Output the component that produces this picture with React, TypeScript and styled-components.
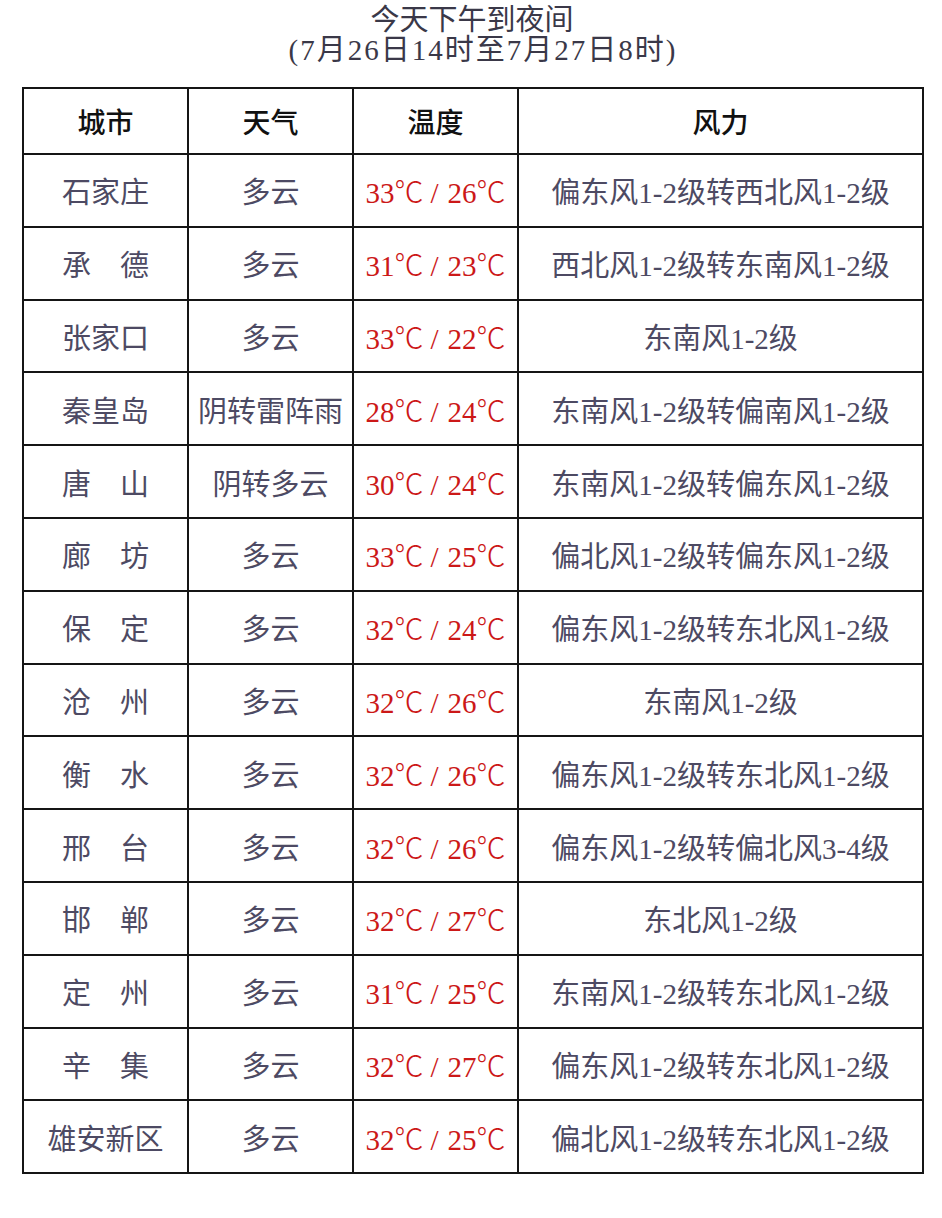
import * as React from "react";
import styled, { createGlobalStyle } from "styled-components";

const GlobalStyle = createGlobalStyle`
  html, body {
    margin: 0;
    background: #ffffff;
  }
`;

const Page = styled.div`
  width: 942px;
  padding: 5px 0 40px 22px;
  box-sizing: border-box;
  font-family: "Liberation Serif", "Noto Sans CJK SC", serif;
`;

const Title = styled.h1`
  margin: 0 0 22px;
  width: 900px;
  text-align: center;
  font-weight: 400;
  font-size: 29px;
  line-height: 30px;
  color: #3a3848;
`;

const SubTitle = styled.span`
  display: inline-block;
  letter-spacing: 2px;
  padding-left: 22px;
`;

const Table = styled.table`
  width: 900px;
  border-collapse: collapse;
  table-layout: fixed;
`;

const Col = styled.col<{ $w: number }>`
  width: ${(p) => p.$w}px;
`;

const HeadCell = styled.th`
  height: 64px;
  border: 2px solid #151515;
  font-size: 28px;
  font-weight: 500;
  color: #111111;
  text-align: center;
  padding: 0;
`;

const Cell = styled.td<{ $hot?: boolean }>`
  height: 70.8px;
  border: 2px solid #151515;
  font-size: 29px;
  color: ${(p) => (p.$hot ? "#cc1818" : "#4d4a63")};
  text-align: center;
  white-space: nowrap;
  padding: 0;
`;

const Deg = styled.span`
  font-family: "Noto Sans CJK SC", sans-serif;
  font-weight: 300;
`;

const Slash = styled.span`
  display: inline-block;
  margin: 0 9px 0 7px;
`;

const rows: [string, string, [number, number], string][] = [
  ["石家庄", "多云", [33, 26], "偏东风1-2级转西北风1-2级"],
  ["承　德", "多云", [31, 23], "西北风1-2级转东南风1-2级"],
  ["张家口", "多云", [33, 22], "东南风1-2级"],
  ["秦皇岛", "阴转雷阵雨", [28, 24], "东南风1-2级转偏南风1-2级"],
  ["唐　山", "阴转多云", [30, 24], "东南风1-2级转偏东风1-2级"],
  ["廊　坊", "多云", [33, 25], "偏北风1-2级转偏东风1-2级"],
  ["保　定", "多云", [32, 24], "偏东风1-2级转东北风1-2级"],
  ["沧　州", "多云", [32, 26], "东南风1-2级"],
  ["衡　水", "多云", [32, 26], "偏东风1-2级转东北风1-2级"],
  ["邢　台", "多云", [32, 26], "偏东风1-2级转偏北风3-4级"],
  ["邯　郸", "多云", [32, 27], "东北风1-2级"],
  ["定　州", "多云", [31, 25], "东南风1-2级转东北风1-2级"],
  ["辛　集", "多云", [32, 27], "偏东风1-2级转东北风1-2级"],
  ["雄安新区", "多云", [32, 25], "偏北风1-2级转东北风1-2级"],
];

export default function App() {
  return (
    <Page>
      <GlobalStyle />
      <Title>
        今天下午到夜间
        <br />
        <SubTitle>(7月26日14时至7月27日8时)</SubTitle>
      </Title>
      <Table>
        <colgroup>
          <Col $w={165} />
          <Col $w={165} />
          <Col $w={165} />
          <Col $w={405} />
        </colgroup>
        <thead>
          <tr>
            <HeadCell>城市</HeadCell>
            <HeadCell>天气</HeadCell>
            <HeadCell>温度</HeadCell>
            <HeadCell>风力</HeadCell>
          </tr>
        </thead>
        <tbody>
          {rows.map(([city, weather, [hi, lo], wind]) => (
            <tr key={city}>
              <Cell>{city}</Cell>
              <Cell>{weather}</Cell>
              <Cell $hot>
                {hi}
                <Deg>℃</Deg>
                <Slash>/</Slash>
                {lo}
                <Deg>℃</Deg>
              </Cell>
              <Cell>{wind}</Cell>
            </tr>
          ))}
        </tbody>
      </Table>
    </Page>
  );
}
